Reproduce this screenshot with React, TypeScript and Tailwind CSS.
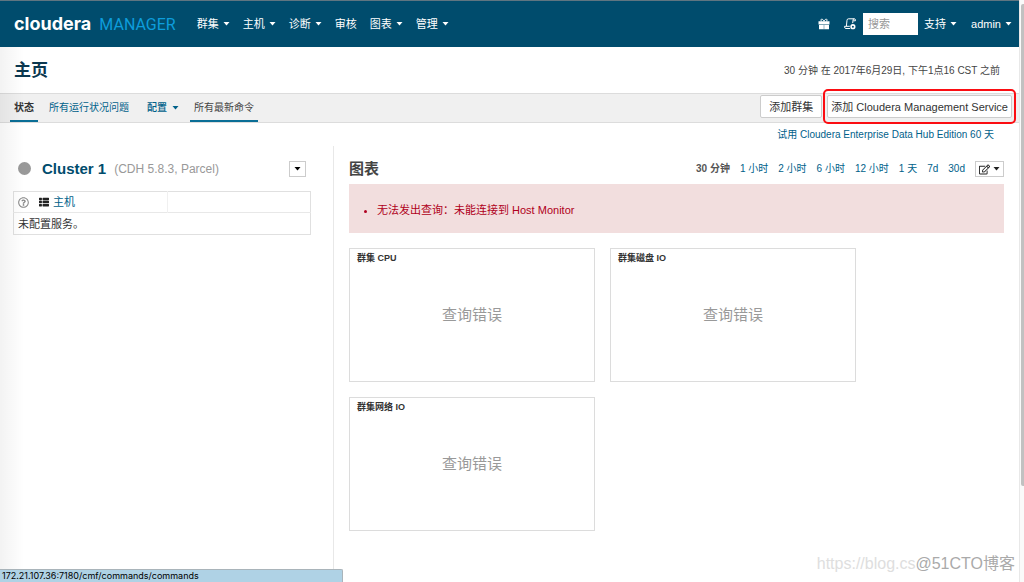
import React, { useState } from "react";
import { FaThList, FaRegEdit, FaRegQuestionCircle } from "react-icons/fa";

const NAV = [
  { label: "群集", menu: true },
  { label: "主机", menu: true },
  { label: "诊断", menu: true },
  { label: "审核", menu: false },
  { label: "图表", menu: true },
  { label: "管理", menu: true },
];

const RANGES = ["30 分钟", "1 小时", "2 小时", "6 小时", "12 小时", "1 天", "7d", "30d"];

const CHARTS = ["群集 CPU", "群集磁盘 IO", "群集网络 IO"];

const Caret = () => (
  <svg className="shrink-0" width="7" height="4" viewBox="0 0 7 4" fill="currentColor" aria-hidden="true">
    <path d="M.5 0h6l-3 3.5z" />
  </svg>
);

const GiftIcon = () => (
  <svg width="12" height="12" viewBox="0 0 12 12" fill="none" aria-hidden="true">
    <path d="M6 3.4C5.2 1.6 4.2.8 3.4 1.2c-.9.5-.4 2 .6 2.2M6 3.4c.8-1.8 1.8-2.6 2.6-2.2.9.5.4 2-.6 2.2" stroke="currentColor" />
    <path d="M.5 3.3h11v3.2H.5zM1 7h10v4.2H1z" fill="currentColor" />
    <path d="M6 7v4.2" stroke="#004c6d" strokeOpacity="0.4" />
  </svg>
);

const CommandsIcon = () => (
  <svg width="12" height="12" viewBox="0 0 12 12" fill="none" stroke="currentColor" aria-hidden="true">
    <path d="M2.4 8.2 3 2.2C3.1 1.3 3.6.8 4.4.8h5.8c-.8 0-1.1.5-1.2 1.3l-.3 3" />
    <path d="M9.2 2.800h2.200V2c0-.8-.4-1.200-1.200-1.200" />
    <path d="M5.800 8.300H.6v.8c0 .8.500 1.400 1.300 1.400h4.200" />
    <circle cx="8.900" cy="8.700" r="1.800" strokeWidth="1.600" />
  </svg>
);

const Header = () => (
  <header className="flex h-[47px] items-center border-t border-[#5f7581] bg-[#004c6d] pr-[7px] pl-[14px] text-white">
    <a href="#" className="flex items-baseline gap-2 leading-5">
      <span className="font-['Inter',sans-serif] text-[18px] font-bold">cloudera</span>
      <span className="font-['Roboto',sans-serif] text-[16px] text-[#0d9ddb]">MANAGER</span>
    </a>
    <nav className="ml-[21px] flex items-center gap-[13px]">
      {NAV.map((item) => (
        <a key={item.label} href="#" className="flex items-center gap-1">
          {item.label}
          {item.menu && <Caret />}
        </a>
      ))}
    </nav>
    <div className="ml-auto flex items-center">
      <button aria-label="Gift">
        <GiftIcon />
      </button>
      <button aria-label="Commands" className="ml-[14px]">
        <CommandsIcon />
      </button>
      <input
        type="text"
        aria-label="搜索"
        placeholder="搜索"
        className="ml-[7px] h-[22px] w-[55px] bg-white px-[5px] text-[#333] placeholder:text-[#999]"
      />
      <a href="#" className="ml-[6px] flex items-center gap-1">
        支持 <Caret />
      </a>
      <a href="#" className="ml-[14px] flex items-center gap-1">
        admin <Caret />
      </a>
    </div>
  </header>
);

const TabBar = () => (
  <div className="flex h-[30px] items-stretch justify-between border-y border-[#dcdcdc] bg-[#f0f0f0] pr-[7px] pl-[10px]">
    <nav className="flex items-stretch text-[10px] text-[#00618a]">
      <a href="#" className="flex items-center border-b-2 border-[#0a6e96] px-1 pt-[2px] font-bold text-[#333]">
        状态
      </a>
      <a href="#" className="ml-[11px] flex items-center border-b-2 border-transparent pt-[2px]">
        所有运行状况问题
      </a>
      <a href="#" className="ml-[18px] flex items-center gap-[5px] border-b-2 border-transparent pt-[2px] font-medium">
        配置 <Caret />
      </a>
      <a href="#" className="ml-[11px] flex items-center border-b-2 border-[#0a6e96] px-1 pt-[2px] text-[#444]">
        所有最新命令
      </a>
    </nav>
    <div className="flex items-start gap-[5px] pt-px">
      <button className="h-[23px] rounded-xs border border-[#ccc] bg-white px-2 text-[#333]">添加群集</button>
      <div className="relative">
        <button className="h-[23px] rounded-xs border border-[#ccc] bg-white px-[3px] text-[#333]">
          添加 Cloudera Management Service
        </button>
        <span className="pointer-events-none absolute -inset-x-1 -inset-y-[6px] rounded-[5px] border-2 border-[#fb0d12]" />
      </div>
    </div>
  </div>
);

const ClusterPanel = () => (
  <section className="w-[334px] shrink-0 border-r border-[#e8e8e8] pr-[22px] pl-[13px]">
    <div className="flex h-[45px] items-center">
      <span className="ml-[5px] size-[13px] rounded-full bg-[#999]" />
      <a href="#" className="ml-[11px] text-[15px] font-bold text-[#004c6d]">
        Cluster 1
      </a>
      <span className="ml-2 text-[12px] text-[#999]">(CDH 5.8.3, Parcel)</span>
      <button
        aria-label="Cluster actions"
        className="mr-[5px] ml-auto flex h-4 w-[17px] items-center justify-center border border-[#ccc] bg-white text-black"
      >
        <Caret />
      </button>
    </div>
    <table className="w-full border border-[#e0e0e0]">
      <tbody>
        <tr className="h-[21px] border-b border-[#e8e8e8]">
          <td className="w-[154px] border-r border-[#f0f0f0]">
            <div className="flex items-center pl-1">
              <FaRegQuestionCircle size={11} className="text-[#888]" />
              <FaThList size={10} className="ml-[10px] text-[#222]" />
              <a href="#" className="ml-1 text-[#00618a]">
                主机
              </a>
            </div>
          </td>
          <td />
        </tr>
        <tr className="h-[22px]">
          <td colSpan={2} className="pl-1">
            未配置服务。
          </td>
        </tr>
      </tbody>
    </table>
  </section>
);

const ChartPanel = () => {
  const [range, setRange] = useState("30 分钟");

  return (
    <section className="min-w-0 flex-1 pr-[15px] pl-[15px]">
      <div className="flex h-[38px] items-center justify-between pt-2">
        <h2 className="text-[15px] font-bold text-[#444]">图表</h2>
        <div className="flex items-center gap-[10px] text-[10px]">
          {RANGES.map((r) => (
            <button
              key={r}
              onClick={() => setRange(r)}
              className={r === range ? "font-bold text-[#555]" : "text-[#00618a]"}
            >
              {r}
            </button>
          ))}
          <button
            aria-label="Edit"
            className="flex h-4 w-[29px] items-center justify-center gap-[3px] border border-[#ccc] bg-white text-[#222]"
          >
            <FaRegEdit size={11} />
            <Caret />
          </button>
        </div>
      </div>
      <ul className="list-disc bg-[#f2dede] pt-[18px] pb-[14px] pl-[28px] leading-[17px] text-[#b00020]">
        <li>无法发出查询：未能连接到 Host Monitor</li>
      </ul>
      <div className="mt-[15px] flex flex-wrap gap-[15px]">
        {CHARTS.map((title) => (
          <div key={title} className="flex h-[134px] w-[246px] flex-col border border-[#dcdcdc]">
            <h3 className="px-[7px] pt-[3px] text-[9px] leading-3 font-bold text-[#333]">{title}</h3>
            <p className="mt-[39px] text-center text-[15px] leading-6 text-[#999]">查询错误</p>
          </div>
        ))}
      </div>
    </section>
  );
};

const App = () => {
  return (
    <div className="relative flex min-h-screen bg-white font-['Liberation_Sans','Noto_Sans_CJK_SC',sans-serif] text-[11px] leading-4 text-[#333]">
      <div className="flex min-w-0 flex-1 flex-col">
        <Header />
        <div className="flex h-[46px] items-center justify-between pt-[2px] pr-[19px] pl-[14px]">
          <h1 className="text-[17px] leading-5 font-bold text-[#0b3850]">主页</h1>
          <p className="text-[10px] text-[#444]">30 分钟 在 2017年6月29日, 下午1点16 CST 之前</p>
        </div>
        <TabBar />
        <a href="#" className="mr-[25px] ml-auto flex h-[23px] items-center text-[10px] text-[#00618a]">
          试用 Cloudera Enterprise Data Hub Edition 60 天
        </a>
        <main className="flex flex-1">
          <ClusterPanel />
          <ChartPanel />
        </main>
      </div>

      {/* scrollbar */}
      <div className="w-[5px] shrink-0 border-l border-[#e8e8e8] bg-[#fafafa] pt-1 pl-px">
        <div className="h-[482px] rounded-l-xs bg-[#c1c1c1]" />
      </div>

      <div className="pointer-events-none absolute top-[47px] bottom-0 left-0 w-6 bg-linear-to-r from-black/5 to-transparent" />
      <div className="absolute bottom-0 left-0 h-[13px] w-[343px] rounded-tr-xs border-t border-r border-[#a9b4ba] bg-[#afd2e5] pl-[2px] font-['Inter',sans-serif] text-[9px] leading-3 text-black">
        172.21.107.36:7180/cmf/commands/commands
      </div>
      <div className="pointer-events-none absolute right-[9px] bottom-2 flex text-[16px] leading-5">
        <span className="text-[#dedede]">https://blog.cs</span>
        <span className="text-[#aaa]">@51CTO博客</span>
      </div>
    </div>
  );
};

export default App;
